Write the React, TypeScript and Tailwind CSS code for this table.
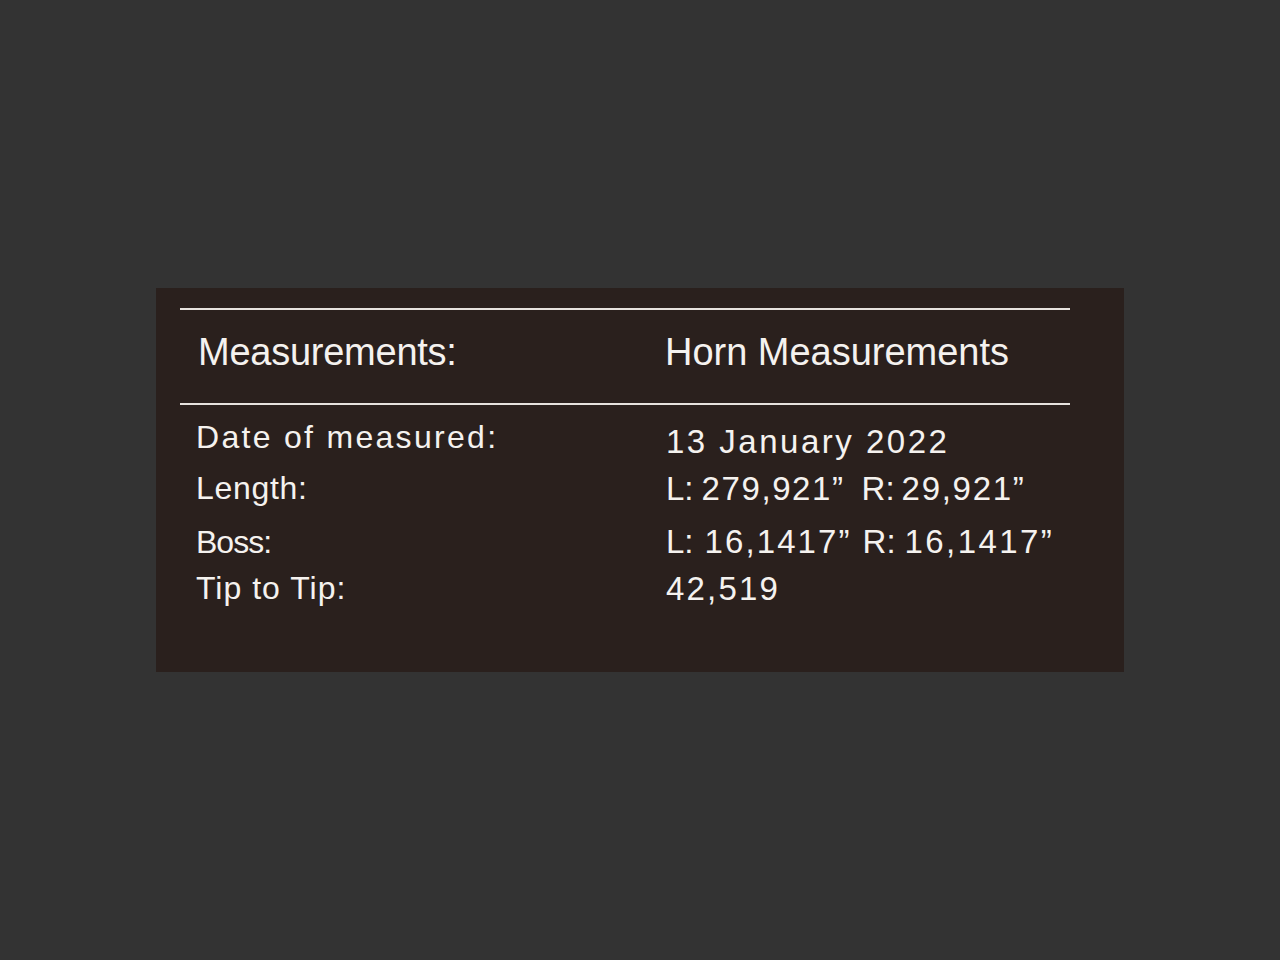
import React from "react";

/**
 * Horn measurements card
 * Dark panel with a two-column spec table between ruled lines
 */
export default function App() {
  return (
    <div className="min-h-screen w-full bg-[#333333] flex items-center justify-center font-['Liberation_Sans',Arial,sans-serif] text-[#f5f2ef]">
      <div className="w-[968px] h-[384px] bg-[#2a201d] pt-[20px] pl-[24px]">
        <div className="w-[890px]">
          {/* Header */}
          <div className="border-t-2 border-b-2 border-[#e6e2de] h-[97px] pt-[23px] flex text-[38px] leading-[38px]">
            <div className="w-[485px] pl-[18px] tracking-[-0.25px]">Measurements:</div>
            <div className="tracking-[-0.02px]">Horn Measurements</div>
          </div>

          {/* Rows */}
          <div className="mt-[16px] flex flex-col">
            <div className="h-[51px] flex">
              <div className="w-[486px] pl-[16px] text-[32px] leading-[32px] tracking-[2.3px]">
                Date of measured:
              </div>
              <div className="mt-[4px] text-[33px] leading-[33px] tracking-[2.5px]">
                13 January 2022
              </div>
            </div>

            <div className="h-[53px] flex">
              <div className="w-[486px] pl-[16px] text-[32px] leading-[32px] tracking-[0.7px]">
                Length:
              </div>
              <div className="text-[33px] leading-[33px] whitespace-nowrap">
                <span>L:</span>
                <span className="ml-[8px] tracking-[1.6px]">279,921”</span>
                <span className="ml-[17px]">R:</span>
                <span className="ml-[7px] tracking-[1.7px]">29,921”</span>
              </div>
            </div>

            <div className="h-[47px] flex">
              <div className="w-[486px] pl-[16px] mt-[1px] text-[32px] leading-[32px] tracking-[-1px]">
                Boss:
              </div>
              <div className="text-[33px] leading-[33px] whitespace-nowrap">
                <span>L:</span>
                <span className="ml-[11px] tracking-[2.1px]">16,1417”</span>
                <span className="ml-[11px]">R:</span>
                <span className="ml-[9px] tracking-[2.4px]">16,1417”</span>
              </div>
            </div>

            <div className="h-[40px] flex">
              <div className="w-[486px] pl-[16px] text-[32px] leading-[32px] tracking-[1px]">
                Tip to Tip:
              </div>
              <div className="text-[33px] leading-[33px] tracking-[2.2px]">42,519</div>
            </div>
          </div>
        </div>
      </div>
    </div>
  );
}
